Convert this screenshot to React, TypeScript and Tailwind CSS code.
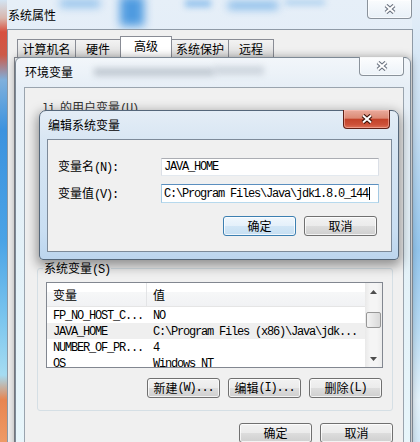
import React from 'react';

function T({ s }: { s: string }) {
  const parts = s.match(/[\u0000-\u00ff]+|[^\u0000-\u00ff]+/g) || [];
  return (
    <>
      {parts.map((p, i) =>
        p.charCodeAt(0) <= 0xff ? (
          <span key={i} className="font-['Liberation_Mono'] tracking-[-1.2px] whitespace-pre">
            {p}
          </span>
        ) : (
          <span key={i} className="font-['Noto_Sans_CJK_SC']">
            {p}
          </span>
        )
      )}
    </>
  );
}

function XGlyph({ dark }: { dark: string }) {
  return (
    <svg width="12" height="10" viewBox="0 0 12 10">
      <path d="M2 1.5 L10 8.5 M10 1.5 L2 8.5" stroke={dark} strokeWidth="4.2" fill="none" />
      <path d="M2 1.5 L10 8.5 M10 1.5 L2 8.5" stroke="#ffffff" strokeWidth="2" fill="none" />
    </svg>
  );
}

function Btn({ label, cls, def }: { label: string; cls: string; def?: boolean }) {
  return (
    <div
      className={`${cls} rounded-[3px] border flex items-center justify-center text-[12px] leading-[14px] shadow-[inset_0_0_0_1px_rgba(255,255,255,0.75)] ${
        def
          ? 'border-[#3c7fb1] bg-[linear-gradient(to_bottom,#f0f7fd_0%,#e4f0fa_50%,#d2e6f6_51%,#c6dff2_100%)]'
          : 'border-[#707070] bg-[linear-gradient(to_bottom,#f2f2f2_0%,#ebebeb_50%,#dddddd_51%,#cfcfcf_100%)]'
      }`}
    >
      <T s={label} />
    </div>
  );
}

const rows = [
  ['FP_NO_HOST_C...', 'NO', false],
  ['JAVA_HOME', 'C:\\Program Files (x86)\\Java\\jdk...', true],
  ['NUMBER_OF_PR...', '4', false],
  ['OS', 'Windows_NT', false],
] as const;

export default function App() {
  return (
    <div className="relative w-[420px] h-[442px] overflow-hidden bg-[linear-gradient(to_bottom,#e6eff8,#d8e7f4_60%,#d2e4f3)] text-black font-['Noto_Sans_CJK_SC']">
      {/* glass strips */}
      <div className="absolute left-0 top-0 w-[7px] h-full bg-[linear-gradient(to_bottom,#d3e4f3_0px,#d9b6ac_18px,#d8503f_32px,#cc5a48_55px,#7fb0dc_80px,#3d93df_130px,#4aa3e6_240px,#7cc6ee_320px,#a5dcf2_375px,#e88550_400px,#ee9a66_442px)]" />
      <div className="absolute right-0 top-0 w-[8px] h-full bg-[linear-gradient(to_bottom,#e4eef8_0px,#c9e0f3_120px,#93c6ee_250px,#b9dcf4_330px,#e6f3fb_400px,#d5eaf8_442px)]" />
      {/* blurred desktop shapes behind glass */}
      <div className="absolute left-[60px] top-[0px] w-[40px] h-[7px] bg-[#86bbea] blur-[4px]" />
      <div className="absolute left-[120px] top-[-4px] w-[24px] h-[30px] bg-[#4f9be0] blur-[5px]" />
      <div className="absolute left-[185px] top-[0px] w-[26px] h-[7px] bg-[#8fc0ec] blur-[3px]" />
      <div className="absolute left-[228px] top-[2px] w-[50px] h-[7px] bg-[#7ab4e8] blur-[4px]" />
      <div className="absolute left-[285px] top-[0px] w-[40px] h-[5px] bg-[#a8cdee] blur-[3px]" />

      {/* outer window title */}
      <div className="absolute left-[8px] top-[7px] text-[12px] leading-[16px]">系统属性</div>
      <div className="absolute left-[367px] top-0 w-[45px] h-[19px] rounded-b-[4px] border border-t-0 border-[#8a929b] bg-[linear-gradient(to_bottom,rgba(255,255,255,0.8),rgba(232,240,247,0.85))] shadow-[inset_0_0_0_1px_rgba(255,255,255,0.6)] flex items-center justify-center">
        <XGlyph dark="#6b7380" />
      </div>

      {/* outer client */}
      <div className="absolute left-[7px] top-[29px] w-[406px] h-[430px] bg-[#f0f0f0] border border-[#8e9aa6]">
        <div className="mt-[6px] h-[21px] flex items-end pl-[9px] text-[12px] leading-[14px]">
          <div className="w-[59px] h-[18px] border border-b-0 border-[#898c95] bg-[linear-gradient(to_bottom,#f3f3f3,#e8e8e8_50%,#dedede)] flex items-center justify-center">计算机名</div>
          <div className="w-[46px] h-[18px] -ml-px border border-b-0 border-[#898c95] bg-[linear-gradient(to_bottom,#f3f3f3,#e8e8e8_50%,#dedede)] flex items-center justify-center">硬件</div>
          <div className="w-[52px] h-[21px] -ml-px border border-b-0 border-[#898c95] bg-white flex items-center justify-center pb-[2px]">高级</div>
          <div className="w-[58px] h-[18px] -ml-px border border-b-0 border-[#898c95] bg-[linear-gradient(to_bottom,#f3f3f3,#e8e8e8_50%,#dedede)] flex items-center justify-center">系统保护</div>
          <div className="w-[46px] h-[18px] -ml-px border border-b-0 border-[#898c95] bg-[linear-gradient(to_bottom,#f3f3f3,#e8e8e8_50%,#dedede)] flex items-center justify-center">远程</div>
        </div>
        <div className="ml-[6px] w-[392px] h-[400px] border border-[#898c95] bg-[#fbfbfb]" />
      </div>

      {/* middle window: 环境变量 */}
      <div className="absolute left-[15px] top-[57px] w-[396px] h-[400px] rounded-t-[6px] border border-[#7d8995] bg-[linear-gradient(to_bottom,#f2f6fa,#e6eef6_30px,#e3f1f8_200px,#e8f6fb)] shadow-[0_0_8px_rgba(0,0,0,0.35)]">
        <div className="absolute left-[78px] top-[10px] w-[120px] h-[8px] bg-[#a3adb8] opacity-60 blur-[3px]" />
        <div className="absolute left-[198px] top-[8px] w-[50px] h-[9px] bg-[#b0bac5] opacity-50 blur-[3px]" />
        <div className="absolute left-[9px] top-[6px] text-[12px] leading-[16px]">环境变量</div>
        <div className="absolute right-[6px] top-[-1px] w-[45px] h-[19px] rounded-b-[4px] border border-t-0 border-[#8a929b] bg-[linear-gradient(to_bottom,rgba(255,255,255,0.85),rgba(236,242,248,0.9))] shadow-[inset_0_0_0_1px_rgba(255,255,255,0.6)] flex items-center justify-center">
          <XGlyph dark="#6b7380" />
        </div>
        <div className="absolute left-[8px] top-[29px] w-[380px] h-[380px] bg-[#f0f0f0] border border-[#9aa4ae] flex flex-col pl-[12px] pr-[10px] text-[12px] leading-[14px]">
          <div className="mt-[12px] h-[14px] pl-[5px] text-[#333]">
            <T s="li 的用户变量(U)" />
          </div>
          <div className="relative mt-[154px] border border-[#d5dfe5] rounded-[3px] pb-[12px]">
            <div className="absolute -top-[8px] left-[5px] px-[1px] bg-[#f0f0f0]">
              <T s="系统变量(S)" />
            </div>
            <div className="ml-[8px] mr-[9px] mt-[13px] h-[86px] border border-[#828790] bg-white flex overflow-hidden">
              <div className="flex-1 flex flex-col">
                <div className="h-[24px] shrink-0 flex border-b border-[#e5e5e5] bg-[linear-gradient(to_bottom,#ffffff_0%,#ffffff_40%,#f6f7f8_41%,#f1f2f4_100%)]">
                  <div className="w-[100px] border-r border-[#e3e4e6] pl-[6px] flex items-center">变量</div>
                  <div className="flex-1 pl-[6px] flex items-center">值</div>
                </div>
                {rows.map(([a, b, sel]) => (
                  <div key={a} className={`h-[16px] shrink-0 flex items-center ${sel ? 'bg-[#efefef]' : ''}`}>
                    <div className="w-[100px] pl-[6px]">
                      <T s={a} />
                    </div>
                    <div className="flex-1 pl-[6px] whitespace-nowrap">
                      <T s={b} />
                    </div>
                  </div>
                ))}
              </div>
              <div className="w-[17px] shrink-0 bg-[linear-gradient(to_right,#e9e9e9,#f5f5f5_30%,#f5f5f5_70%,#ececec)] flex flex-col items-center">
                <div className="h-[17px] flex items-center justify-center">
                  <svg width="7" height="4" viewBox="0 0 7 4">
                    <polygon points="0,4 3.5,0 7,4" fill="#4d4d4d" />
                  </svg>
                </div>
                <div className="mt-[12px] w-[15px] h-[16px] rounded-[2px] border border-[#979797] bg-[linear-gradient(to_right,#f3f3f3,#e6e6e6_50%,#d9d9d9)]" />
                <div className="mt-auto h-[17px] flex items-center justify-center">
                  <svg width="7" height="4" viewBox="0 0 7 4">
                    <polygon points="0,0 7,0 3.5,4" fill="#4d4d4d" />
                  </svg>
                </div>
              </div>
            </div>
            <div className="mt-[10px] flex justify-end gap-[8px] pr-[10px]">
              <Btn label="新建(W)..." cls="w-[73px] h-[20px]" />
              <Btn label="编辑(I)..." cls="w-[73px] h-[20px]" />
              <Btn label="删除(L)" cls="w-[73px] h-[20px]" />
            </div>
          </div>
          <div className="mt-[12px] flex justify-end gap-[8px]">
            <Btn label="确定" cls="w-[73px] h-[20px]" />
            <Btn label="取消" cls="w-[73px] h-[20px]" />
          </div>
        </div>
      </div>

      {/* inner window: 编辑系统变量 */}
      <div className="absolute left-[39px] top-[110px] w-[360px] h-[150px] rounded-t-[7px] rounded-b-[4px] border border-[#55677a] bg-[linear-gradient(to_bottom,#e4edf6,#d8e6f3_30px,#c9def2_120px,#bcd5ee)] shadow-[0_4px_12px_2px_rgba(0,0,0,0.4)]">
        <div className="absolute left-[8px] top-[6px] text-[12px] leading-[16px]">编辑系统变量</div>
        <div className="absolute right-[8px] top-[-1px] w-[47px] h-[19px] rounded-b-[4px] border border-t-0 border-[#5f2016] bg-[linear-gradient(to_bottom,#e9ab9d_0%,#dc8a75_45%,#c3432a_52%,#cc5038_80%,#dc7258_100%)] shadow-[inset_0_0_0_1px_rgba(255,200,190,0.5)] flex items-center justify-center">
          <XGlyph dark="#3b1108" />
        </div>
        <div className="absolute left-[7px] top-[28px] w-[345px] h-[113px] bg-[#f0f0f0] border border-[#7d8a99] flex flex-col text-[12px] leading-[14px]">
          <div className="mt-[18px] flex items-center pl-[10px]">
            <div className="w-[103px]">
              <T s="变量名(N):" />
            </div>
            <div className="w-[218px] h-[18px] bg-white border border-[#dbdfe6] border-t-[#abadb3] border-b-[#e3e9ef] pl-[2px] flex items-center">
              <T s="JAVA_HOME" />
            </div>
          </div>
          <div className="mt-[8px] flex items-center pl-[10px]">
            <div className="w-[103px]">
              <T s="变量值(V):" />
            </div>
            <div className="w-[218px] h-[19px] bg-white border border-[#a4c9e3] border-t-[#5b8fbf] border-b-[#b7d9ed] pl-[2px] flex items-center">
              <T s="C:\Program Files\Java\jdk1.8.0_144" />
              <div className="ml-[1px] w-[1px] h-[13px] bg-black" />
            </div>
          </div>
          <div className="mt-[13px] flex justify-end gap-[8px] pr-[14px]">
            <Btn label="确定" cls="w-[73px] h-[20px]" def />
            <Btn label="取消" cls="w-[73px] h-[20px]" />
          </div>
        </div>
      </div>
    </div>
  );
}
